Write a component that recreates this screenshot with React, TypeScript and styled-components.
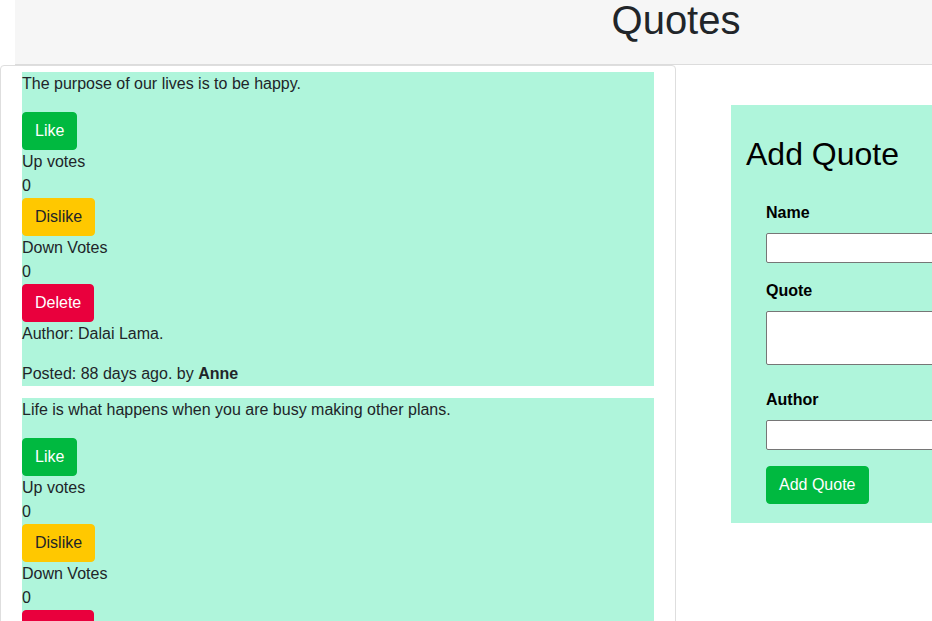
import React from "react";
import styled, { createGlobalStyle } from "styled-components";

const Global = createGlobalStyle`
  html, body { margin: 0; padding: 0; overflow: hidden; background: #fff; }
  body {
    font-family: "Liberation Sans", Arial, sans-serif;
    font-size: 16px;
    line-height: 1.5;
    color: #212529;
  }
  * { box-sizing: border-box; }
`;

const Page = styled.div`
  width: 1400px;
`;

const Header = styled.header`
  margin-left: 15px;
  width: 1322px;
  height: 65px;
  background: #f6f6f6;
  border-bottom: 1px solid #dcdcdc;
  display: flex;
  justify-content: center;
`;

const Title = styled.h1`
  margin: 0;
  font-size: 40px;
  font-weight: 400;
  line-height: 40px;
  color: #212529;
`;

const Main = styled.main`
  display: flex;
  align-items: flex-start;
`;

const Card = styled.section`
  width: 676px;
  border: 1px solid #dedede;
  border-radius: 4px;
  padding: 6px 21px 0 21px;
`;

const QuoteItem = styled.article`
  background: #aff5db;
  margin-bottom: 12px;
`;

const Para = styled.p<{ $mb?: number }>`
  margin: 0 0 ${(p) => p.$mb ?? 0}px;
`;

const Line = styled.div``;

const Btn = styled.button<{ $variant: "like" | "dislike" | "delete" }>`
  display: block;
  font-family: inherit;
  font-size: 16px;
  line-height: 24px;
  padding: 6px 12px;
  border: 1px solid transparent;
  border-radius: 4px;
  cursor: pointer;
  background: ${(p) =>
    p.$variant === "like" ? "#00b940" : p.$variant === "dislike" ? "#ffc800" : "#e9003d"};
  border-color: ${(p) =>
    p.$variant === "like" ? "#00b940" : p.$variant === "dislike" ? "#ffc800" : "#e9003d"};
  color: ${(p) => (p.$variant === "dislike" ? "#212529" : "#fff")};
`;

const Side = styled.aside`
  margin-left: 55px;
  margin-top: 40px;
  width: 420px;
  background: #aff5db;
  padding: 30px 0 19px 15px;
`;

const SideTitle = styled.h2`
  margin: 0 0 28px;
  font-size: 32px;
  font-weight: 400;
  line-height: 38px;
  color: #000;
`;

const Form = styled.form`
  margin-left: 20px;
`;

const Field = styled.div<{ $mb: number }>`
  margin-bottom: ${(p) => p.$mb}px;
`;

const Label = styled.label`
  display: block;
  font-weight: 700;
  color: #000;
  margin-bottom: 8px;
  line-height: 24px;
`;

const Input = styled.input`
  display: block;
  width: 300px;
  height: 30px;
  border: 1px solid #767676;
  border-radius: 2px;
  background: #fff;
`;

const TextArea = styled.textarea`
  display: block;
  width: 300px;
  height: 54px;
  border: 1px solid #767676;
  border-radius: 2px;
  background: #fff;
  resize: none;
`;

const SubmitBtn = styled.button`
  font-family: inherit;
  font-size: 16px;
  line-height: 24px;
  padding: 6px 12px;
  border: 1px solid #00b940;
  border-radius: 4px;
  background: #00b940;
  color: #fff;
`;

const quotes = [
  { text: "The purpose of our lives is to be happy.", author: "Dalai Lama", days: 88, by: "Anne" },
  { text: "Life is what happens when you are busy making other plans.", author: "John Lennon", days: 88, by: "Anne" },
];

export default function App() {
  return (
    <Page>
      <Global />
      <Header>
        <Title>Quotes</Title>
      </Header>
      <Main>
        <Card>
          {quotes.map((q, i) => (
            <QuoteItem key={i}>
              <Para $mb={16}>{q.text}</Para>
              <Btn $variant="like">Like</Btn>
              <Line>Up votes</Line>
              <Line>0</Line>
              <Btn $variant="dislike">Dislike</Btn>
              <Line>Down Votes</Line>
              <Line>0</Line>
              <Btn $variant="delete">Delete</Btn>
              <Para $mb={16}>Author: {q.author}.</Para>
              <Para>
                Posted: {q.days} days ago. by <strong>{q.by}</strong>
              </Para>
            </QuoteItem>
          ))}
        </Card>
        <Side>
          <SideTitle>Add Quote</SideTitle>
          <Form onSubmit={(e) => e.preventDefault()}>
            <Field $mb={16}>
              <Label>Name</Label>
              <Input type="text" />
            </Field>
            <Field $mb={23}>
              <Label>Quote</Label>
              <TextArea />
            </Field>
            <Field $mb={16}>
              <Label>Author</Label>
              <Input type="text" />
            </Field>
            <SubmitBtn type="submit">Add Quote</SubmitBtn>
          </Form>
        </Side>
      </Main>
    </Page>
  );
}
